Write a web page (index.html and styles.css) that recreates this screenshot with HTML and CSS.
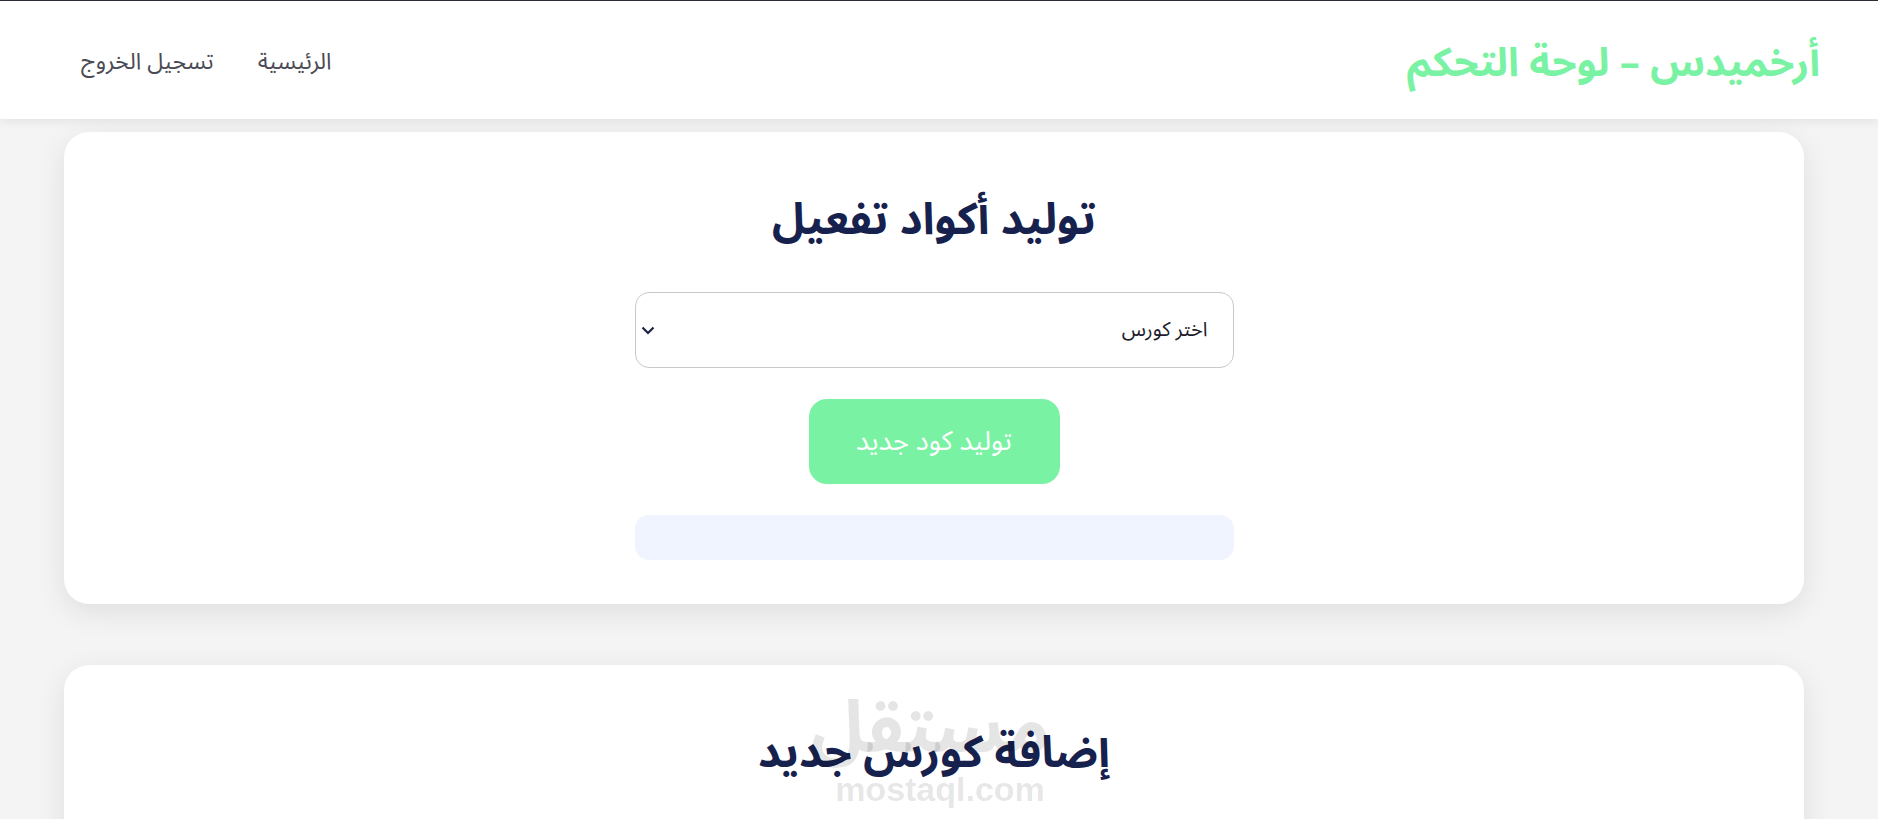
FILE: index.html
```html
<!DOCTYPE html>
<html lang="ar" dir="rtl">
<head>
<meta charset="utf-8">
<title>أرخميدس – لوحة التحكم</title>
<link rel="stylesheet" href="styles.css">
</head>
<body>
<header class="topbar">
  <div class="brand">أرخميدس – لوحة التحكم</div>
  <nav class="nav">
    <a href="#" class="nav-link">الرئيسية</a>
    <a href="#" class="nav-link">تسجيل الخروج</a>
  </nav>
</header>
<main class="main">
  <section class="card">
    <h2 class="card-title">توليد أكواد تفعيل</h2>
    <div class="select-box">
      <span class="select-text">اختر كورس</span>
      <svg class="select-arrow" width="14" height="9" viewBox="0 0 14 9"><path d="M1.5 1.5 L7 7 L12.5 1.5" fill="none" stroke="#1e2340" stroke-width="2.2"/></svg>
    </div>
    <button class="btn">توليد كود جديد</button>
    <div class="result"></div>
  </section>
  <section class="card">
    <h2 class="card-title">إضافة كورس جديد</h2>
  </section>
</main>
<div class="watermark">
  <div class="wm-ar">مستقل</div>
  <div class="wm-en">mostaql.com</div>
</div>
</body>
</html>
```
FILE: styles.css
```css
html, body {
  margin: 0;
  padding: 0;
}
body {
  background: #f4f4f4;
  font-family: "Noto Sans Arabic", "Noto Kufi Arabic", "DejaVu Sans", sans-serif;
  height: 819px;
  overflow: hidden;
  border-top: 1px solid #2b2b3a;
  box-sizing: border-box;
  position: relative;
}
.topbar {
  height: 118px;
  background: #fff;
  display: flex;
  align-items: center;
  justify-content: space-between;
  padding: 0 58px 0 81px;
  box-shadow: 0 2px 10px rgba(0,0,0,0.08);
  position: relative;
  z-index: 1;
}
.brand {
  color: #7af2a4;
  font-size: 40px;
  font-weight: 700;
  margin-top: 6px;
}
.nav {
  display: flex;
  gap: 44px;
  margin-top: 2px;
}
.nav-link {
  color: #4a4a55;
  text-decoration: none;
  font-size: 23px;
}
.main {
  display: flex;
  flex-direction: column;
  gap: 61px;
  padding: 13px 74px 0 64px;
}
.card {
  background: #fff;
  border-radius: 25px;
  box-shadow: 0 8px 30px rgba(0,0,0,0.09);
  display: flex;
  flex-direction: column;
  align-items: center;
  padding: 40px 0 44px;
}
.card-title {
  margin: 0 0 24px;
  font-size: 44px;
  font-weight: 700;
  color: #16214d;
  line-height: 96px;
  height: 96px;
}
.select-box {
  width: 599px;
  height: 76px;
  box-sizing: border-box;
  border: 1px solid #c9c9c9;
  border-radius: 14px;
  display: flex;
  align-items: center;
  justify-content: space-between;
  padding: 0 25px 0 5px;
}
.select-text {
  font-size: 20px;
  color: #1b1b2b;
}
.select-arrow {
  display: block;
}
.btn {
  margin-top: 31px;
  width: 251px;
  height: 85px;
  border: none;
  border-radius: 18px;
  background: #7af2a4;
  color: #fff;
  font-family: inherit;
  font-size: 27px;
}
.result {
  margin-top: 31px;
  width: 599px;
  height: 45px;
  background: #eff4fe;
  border-radius: 14px;
}
.watermark {
  position: absolute;
  left: 830px;
  top: 686px;
  width: 220px;
  text-align: center;
  color: rgba(0,0,0,0.1);
  pointer-events: none;
}
.wm-ar {
  font-size: 72px;
  font-weight: 700;
  line-height: 84px;
}
.wm-en {
  font-family: "Liberation Sans", Arial, sans-serif;
  font-size: 34px;
  font-weight: 700;
  line-height: 36px;
}
```
